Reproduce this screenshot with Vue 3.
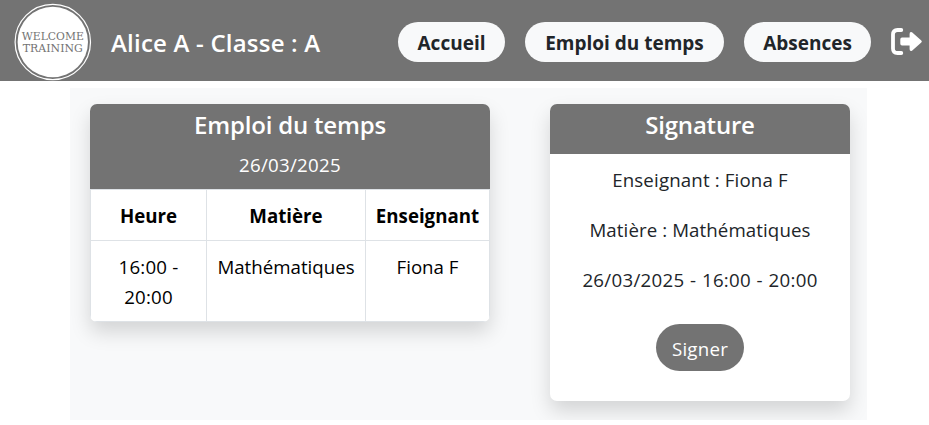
<script setup>
const links = [
  { label: 'Accueil', cls: 'home' },
  { label: 'Emploi du temps', cls: 'schedule' },
  { label: 'Absences', cls: 'absences' },
]
const columns = ['Heure', 'Matière', 'Enseignant']
const lessons = [{ time: '16:00 - 20:00', subject: 'Mathématiques', teacher: 'Fiona F' }]
</script>

<template>
  <header class="navbar">
    <svg class="logo" viewBox="0 0 78 78" aria-label="Welcome Training">
      <circle cx="38.8" cy="39" r="37.7" fill="none" stroke="#fff" stroke-width="1.2" />
      <circle cx="38.8" cy="39" r="35.2" fill="#fff" />
      <text x="7.8" y="37" textLength="62" lengthAdjust="spacingAndGlyphs">WELCOME</text>
      <text x="8.8" y="49" textLength="60" lengthAdjust="spacingAndGlyphs">TRAINING</text>
    </svg>
    <h1>Alice A - Classe : A</h1>
    <nav>
      <a v-for="link in links" :key="link.label" :class="['pill', link.cls]"><span>{{ link.label }}</span></a>
    </nav>
    <svg class="logout" viewBox="0 0 32 28" aria-label="Déconnexion">
      <path d="M10.3 2H6.5Q2 2 2 6.5V20.5Q2 25 6.5 25H10.3" fill="none" stroke="#fff" stroke-width="3.8" stroke-linecap="round" />
      <path d="M11 9.6H18.6V6Q18.6 3.4 21 4.3L30.3 12.4Q31.4 13.5 30.3 14.6L21 22.7Q18.6 23.6 18.6 21V17.4H11Q9.3 17.4 9.3 15.7V11.3Q9.3 9.6 11 9.6Z" fill="#fff" />
    </svg>
  </header>

  <main>
    <section class="card timetable">
      <div class="card-head">
        <h2>Emploi du temps</h2>
        <p class="date">26/03/2025</p>
      </div>
      <table>
        <colgroup><col class="c1" /><col class="c2" /><col class="c3" /></colgroup>
        <thead>
          <tr><th v-for="c in columns" :key="c">{{ c }}</th></tr>
        </thead>
        <tbody>
          <tr v-for="l in lessons" :key="l.time">
            <td class="time">{{ l.time }}</td>
            <td>{{ l.subject }}</td>
            <td>{{ l.teacher }}</td>
          </tr>
        </tbody>
      </table>
    </section>

    <section class="card signature">
      <div class="card-head"><h2>Signature</h2></div>
      <div class="card-body">
        <p class="teacher">Enseignant : Fiona F</p>
        <p class="subject">Matière : Mathématiques</p>
        <p class="slot">26/03/2025 - 16:00 - 20:00</p>
        <button type="button">Signer</button>
      </div>
    </section>
  </main>
</template>

<style>
body {
  margin: 0;
  background: #fff;
  overflow: hidden;
}
</style>

<style scoped>
.navbar, main, button {
  font-family: 'Segoe UI', 'Open Sans', 'Noto Sans', sans-serif;
}
.navbar {
  box-sizing: border-box;
  height: 81px;
  background: #737373;
  display: flex;
  align-items: center;
  padding: 3px 6px 0 14px;
}
.logo {
  width: 78px;
  height: 78px;
  flex: none;
}
.logo text {
  font-family: 'DejaVu Serif', serif;
  font-size: 10.3px;
  fill: #737373;
}
h1, h2, p {
  margin: 0;
}
h1 {
  margin-left: 19px;
  padding-top: 1px;
  font-size: 24px;
  font-weight: 600;
  line-height: 30px;
  letter-spacing: 0.21px;
  color: #fff;
  white-space: nowrap;
}
nav {
  margin-left: auto;
  display: flex;
  gap: 20px;
}
.pill {
  box-sizing: border-box;
  height: 40px;
  border-radius: 20px;
  background: #f8f9fa;
  color: #212529;
  font-size: 19px;
  font-weight: 700;
  line-height: 42px;
  display: flex;
  justify-content: center;
  white-space: nowrap;
}
.home { width: 107px; }
.schedule { width: 199px; }
.absences { width: 127px; }
.logout {
  width: 32px;
  height: 28px;
  margin-left: 20px;
  flex: none;
}
main {
  box-sizing: border-box;
  margin: 7px 0 0 70px;
  width: 797px;
  height: 332px;
  padding: 16px 17px 0 20px;
  background: #f8f9fa;
  overflow: hidden;
  display: flex;
  justify-content: space-between;
  align-items: flex-start;
  font-size: 18.7px;
  line-height: 30px;
  color: #212529;
  text-align: center;
}
.card {
  background: #fff;
  border-radius: 7px;
  overflow: hidden;
  box-shadow: 0 10px 20px rgba(0, 0, 0, 0.15);
}
.card-head {
  box-sizing: border-box;
  background: #737373;
  color: #fff;
  padding-top: 6px;
}
h2 {
  font-size: 24px;
  font-weight: 600;
  line-height: 30px;
  letter-spacing: -0.2px;
}
.timetable {
  width: 400px;
}
.timetable .card-head {
  height: 85px;
}
.date {
  margin-top: 10px;
  letter-spacing: 0.27px;
}
table {
  width: 400px;
  table-layout: fixed;
  border-collapse: collapse;
  color: #000;
}
.c1 { width: 116px; }
.c2 { width: 159px; }
.c3 { width: 124px; }
th, td {
  border: 1px solid #dee2e6;
  padding: 11px 9px 9px;
  vertical-align: top;
}
th {
  font-weight: 700;
}
.time {
  letter-spacing: 0.2px;
}
.signature {
  width: 300px;
  height: 297px;
}
.signature .card-head {
  height: 50px;
}
.card-body {
  display: flex;
  flex-direction: column;
  align-items: center;
  gap: 20px;
  padding-top: 11px;
}
.teacher { letter-spacing: 0.15px; }
.subject { letter-spacing: 0.09px; }
.slot {
  letter-spacing: 0.28px;
  word-spacing: 0.5px;
}
button {
  margin-top: 9px;
  width: 88px;
  height: 47px;
  border: 0;
  border-radius: 24px;
  padding: 2px 0 0;
  background: #737373;
  color: #fff;
  font-size: 18.7px;
  letter-spacing: 0.25px;
}
</style>
